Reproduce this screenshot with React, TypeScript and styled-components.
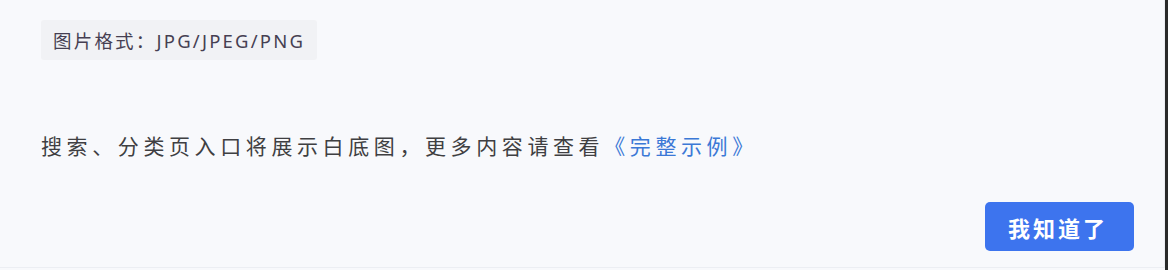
import styled, { createGlobalStyle } from "styled-components";

const GlobalStyle = createGlobalStyle`
  html, body {
    margin: 0;
    padding: 0;
    background: #2b2b2b;
  }
`;

const Frame = styled.div`
  width: 1168px;
  height: 270px;
  box-sizing: border-box;
  border-right: 3px solid #2a2a2a;
  background: #f8f9fc;
  overflow: hidden;
`;

const Panel = styled.div`
  height: 268px;
  box-sizing: border-box;
  border-right: 1px solid #eceef3;
  border-bottom: 1px solid #eceef3;
  padding: 20px 0 0 41px;
  display: flex;
  flex-direction: column;
  font-family: "Noto Sans", "Noto Sans CJK SC", sans-serif;
`;

const FormatTag = styled.div`
  align-self: flex-start;
  width: 276px;
  height: 40px;
  box-sizing: border-box;
  padding-left: 12px;
  display: flex;
  align-items: center;
  background: #f1f2f5;
  border-radius: 3px;
  color: #463f52;
  font-size: 18.5px;
  letter-spacing: 2.2px;
  white-space: nowrap;
`;

const Notice = styled.p`
  margin: 73px 0 0;
  color: #3f3f42;
  font-size: 21px;
  line-height: 26px;
  letter-spacing: 4.6px;
  white-space: nowrap;
`;

const ExampleLink = styled.a`
  color: #3b78d6;
  text-decoration: none;
  cursor: pointer;
`;

const Footer = styled.div`
  margin-top: auto;
  padding: 0 30px 16px 0;
  display: flex;
  justify-content: flex-end;
`;

const ConfirmButton = styled.button`
  width: 149px;
  height: 49px;
  border: none;
  border-radius: 5px;
  background: #3d74ee;
  color: #ffffff;
  font-family: "Noto Sans CJK SC", sans-serif;
  font-size: 22px;
  font-weight: 700;
  letter-spacing: 3px;
  padding-left: 3px;
  cursor: pointer;
`;

export default function App() {
  return (
    <>
      <GlobalStyle />
      <Frame>
        <Panel>
          <FormatTag>图片格式：JPG/JPEG/PNG</FormatTag>
          <Notice>
            搜索、分类页入口将展示白底图，更多内容请查看
            <ExampleLink>《完整示例》</ExampleLink>
          </Notice>
          <Footer>
            <ConfirmButton>我知道了</ConfirmButton>
          </Footer>
        </Panel>
      </Frame>
    </>
  );
}
